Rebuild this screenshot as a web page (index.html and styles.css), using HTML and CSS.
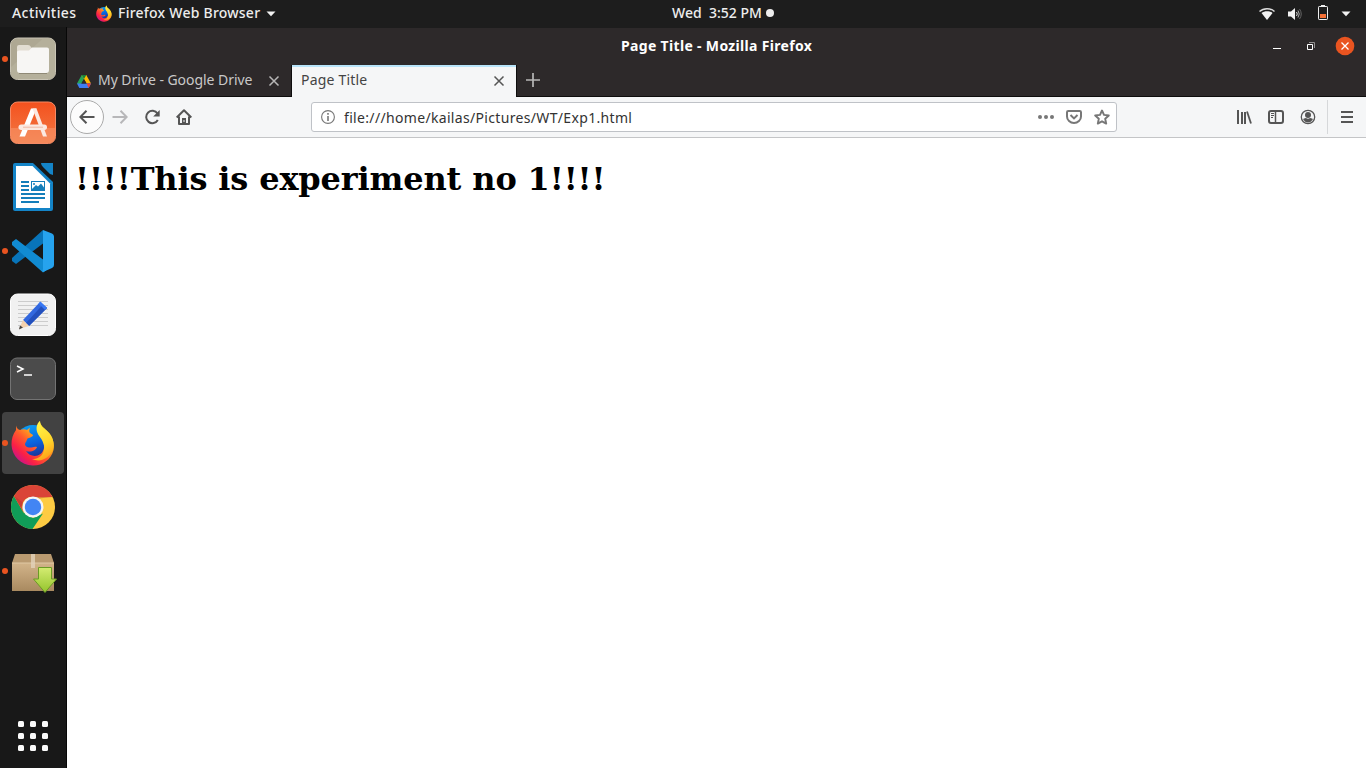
FILE: index.html
```html
<!DOCTYPE html>
<html lang="en">
<head>
<meta charset="utf-8">
<title>Page Title</title>
<link rel="stylesheet" href="styles.css">
</head>
<body>
<svg class="defs" width="0" height="0">
  <defs>
    <linearGradient id="fxBody" x1="0.85" y1="0.1" x2="0.15" y2="0.9"><stop offset="0" stop-color="#fff13a"/><stop offset="0.3" stop-color="#ffb01c"/><stop offset="0.55" stop-color="#ff5b2c"/><stop offset="0.8" stop-color="#fb2046"/><stop offset="1" stop-color="#c8148c"/></linearGradient>
    <linearGradient id="fxGlobe" x1="0.3" y1="0" x2="0.6" y2="1"><stop offset="0" stop-color="#0aa0f5"/><stop offset="0.5" stop-color="#0a62dd"/><stop offset="1" stop-color="#24217c"/></linearGradient>
    <linearGradient id="fxTail" x1="0.3" y1="0" x2="0.6" y2="1"><stop offset="0" stop-color="#fff44a"/><stop offset="0.6" stop-color="#ffd52a"/><stop offset="1" stop-color="#ff9f18"/></linearGradient>
    <linearGradient id="orange" x1="0" y1="0" x2="0" y2="1"><stop offset="0" stop-color="#f4511e"/><stop offset="1" stop-color="#f27a45"/></linearGradient>
    <linearGradient id="box" x1="0" y1="0" x2="0" y2="1"><stop offset="0" stop-color="#d2b48a"/><stop offset="1" stop-color="#a98a60"/></linearGradient>
    <linearGradient id="down" x1="0" y1="0" x2="0" y2="1"><stop offset="0" stop-color="#d4ec72"/><stop offset="1" stop-color="#94c42c"/></linearGradient>
    <symbol id="firefox" viewBox="0 0 44 46">
      <circle cx="22" cy="23.500" r="18.500" fill="url(#fxGlobe)"/>
      <path d="M5 5.500 C5.500 8 7 9.500 9 10 C11 9 14 9 16 10 L19 7.500 C18 10 18 12 19 13 L22 15 C22 17 18 18 16.500 18.500 L15 22 C13 24 14 27 18 27.500 C21 28 23 26 26 27 C25 30.500 20 32.500 15 31 C19 38 31 38 33 28 C34 19 28 16 27 10 C26 5 28 2 29 1 C29 6 34 8 37 12 C42 18 44 24 42.500 30 C40 40 31 46 21.500 45.500 C10 45 1 36 .5 25 C.3 19 2 14 5 10 Z" fill="url(#fxBody)"/>
      <path d="M29 1 C25 4 24.500 10 27.500 15 C32 21 35 26 32 33 C30 37 26 39 21 39 C30 43 39 38 42 29 C44 20 40 14 36 11 C31 8 29 5 29 1Z" fill="url(#fxTail)"/>
    </symbol>
  </defs>
</svg>

<header class="topbar">
  <span class="activities">Activities</span>
  <svg class="top-fox" width="16" height="17"><use href="#firefox"/></svg>
  <span class="appname">Firefox Web Browser</span>
  <svg class="caret" width="10" height="6"><path d="M.5.5h9L5 5.300z" fill="#f2f2f2"/></svg>
  <div class="clock"><span class="clock-day">Wed</span><span class="clock-time">3:52 PM</span><i class="clock-dot"></i></div>
  <div class="status">
    <svg class="wifi" width="16" height="14" viewBox="0 0 16 14"><path d="M.5 4.500C4.500.8 11.500.8 15.500 4.500" fill="none" stroke="#ddd" stroke-width="1.500"/><path d="M2.500 6C5.500 3.500 10.500 3.500 13.500 6L8 13z" fill="#f2f2f2"/></svg>
    <svg class="sound" width="16" height="14" viewBox="0 0 16 14"><path d="M1 4.500h3L8 1v12L4 9.500H1z" fill="#f2f2f2"/><path d="M9.500 5q1.500 2 0 4" stroke="#ddd" fill="none"/><path d="M11 3.500q2.500 3.500 0 7" stroke="#aaa" fill="none"/><path d="M12.500 2q3.500 5 0 10" stroke="#666" fill="none"/></svg>
    <svg class="battery" width="10" height="16" viewBox="0 0 10 16"><path d="M3 0h4v1H3z" fill="#eee"/><rect x=".5" y="1.500" width="9" height="13" rx=".7" fill="none" stroke="#eee"/><path d="M2 9h6v4H2z" fill="#f37036"/></svg>
    <svg width="10" height="6"><path d="M.5.5h9L5 5.300z" fill="#f2f2f2"/></svg>
  </div>
</header>

<div class="desktop">
  <nav class="dock">
    <div class="app running"><svg width="48" height="46" viewBox="0 0 48 46"><rect x="1.500" y="2" width="45" height="41.500" rx="7" fill="#aea893" stroke="#c9c4b5"/><path d="M2 31L34 2.500h6q6 0 6 6v29q-1 5-6 5.500H8q-6 0-6-6z" fill="#b5b09b"/><path d="M8 11q0-2 2-2h9q2 0 3 2l1.500 2v5H8z" fill="#e2ddd2"/><path d="M8 16q0-1.500 2-1.500h10l3-3h15q2 0 2 2V34q0 3-3 3H11q-3 0-3-3z" fill="#f7f6f4"/><path d="M10 37.500h28" stroke="#8f8976"/></svg></div>
    <div class="app"><svg width="48" height="46" viewBox="0 0 48 46"><rect x="1.500" y="2" width="45" height="41.500" rx="7" fill="url(#orange)" stroke="#f58a65"/><path d="M2 28h44v9q-1 6-7 6H8q-6 0-6-6z" fill="#f79a70" opacity=".5"/><path d="M22 8.500h5.500L16 36.500h-5.500z" fill="#fff"/><path d="M23.500 8.500h4l10.500 28h-4z" fill="#fbe9e2"/><rect x="9.500" y="24.500" width="28.500" height="5.500" rx="2.700" fill="#fbe9e2"/><path d="M14 27.300h20" stroke="#f2c7b7" stroke-width="1.500"/></svg></div>
    <div class="app"><svg width="48" height="50" viewBox="0 0 48 50"><path d="M4 3q0-2 2-2h18l20 19v27q0 2-2 2H6q-2 0-2-2z" fill="#1484c7"/><path d="M7 4h16.500L41 21.500V46H7z" fill="#fff"/><path d="M32 1h12v12q-3 0-5-3l-5-5q-2-2-2-4z" fill="#1484c7"/><path d="M12 20h8M12 24h8M12 28h8M12 32h24M12 36h24M12 40h18" stroke="#147eba" stroke-width="2"/><rect x="22.500" y="19.500" width="13" height="9" fill="#fff" stroke="#147eba"/><path d="M23 27l4-4 2 1.500 3-3 3 4V28H23z" fill="#147eba"/><circle cx="25" cy="22" r="1" fill="#147eba"/></svg></div>
    <div class="app running"><svg width="48" height="46" viewBox="0 0 48 46"><path d="M34 2L3 30v3l4 3 27-20.500z" fill="#0874b9"/><path d="M7 11L3 14v3l31 27.500 3-2V31.500H34z" fill="#118bd2"/><path d="M34 2l9 3.500q2 1 2 3V37q0 2-2 3l-9 4q-1 0 0-3V2z" fill="#26a3ee"/></svg></div>
    <div class="app"><svg width="48" height="46" viewBox="0 0 48 46"><rect x="1.500" y="2" width="45" height="41.500" rx="7" fill="#f1f1f1" stroke="#fff"/><path d="M9 9.500h30M9 13.500h30M9 17.500h30M9 21.500h30M9 25.500h30M9 29.500h30M9 33.500h30" stroke="#ccc"/><path d="M31 10l7 6-18 18-6-6z" fill="#3268df"/><path d="M34 12.500l4 3.500-18 18-3-3z" fill="#2350bd"/><path d="M29.500 11.500l2-2 6.500 6.500-2 2z" fill="#3878f4"/><path d="M14 28l6 6-10 3z" fill="#f4d1ae"/><path d="M11 33.500l3 2-4 2z" fill="#444"/></svg></div>
    <div class="app"><svg width="48" height="46" viewBox="0 0 48 46"><rect x="1.500" y="2" width="45" height="41.500" rx="6.500" fill="#4b4b4b" stroke="#737373"/><path d="M8 10l6 3-6 3" fill="none" stroke="#fff" stroke-width="1.500"/><path d="M15 19h8" stroke="#fff" stroke-width="1.500"/></svg></div>
    <div class="app running active"><svg width="44" height="46"><use href="#firefox"/></svg></div>
    <div class="app"><svg width="46" height="46" viewBox="0 0 46 46"><circle cx="23" cy="23" r="22" fill="#fdcb43"/><path d="M3.950 12A22 22 0 0 0 22.500 45L33 29.500 23 34 13.500 28.500z" fill="#109d58"/><path d="M3.950 12A22 22 0 0 1 42.500 13H23a10 10 0 0 0-9.500 15.500z" fill="#da4437"/><path d="M4 12l9.500 16.500 2-8zM42.500 13H24v2z" fill="#b5352e" opacity=".45"/><circle cx="23" cy="23" r="10.500" fill="#f4f5f6"/><circle cx="23" cy="23" r="8.200" fill="#4285f4"/></svg></div>
    <div class="app running"><svg width="48" height="46" viewBox="0 0 48 46"><path d="M6 6h36l3 9H3z" fill="#b99a70"/><path d="M3 15h42v28H3z" fill="url(#box)"/><path d="M3 15h42" stroke="#dfc8a4"/><path d="M22 6h4v14h-4z" fill="#e2d2ba" opacity=".8"/><path d="M29.500 19.500h13V31H47.500L36 44.500 24.500 31h5z" fill="url(#down)" stroke="#6b9c25"/></svg></div>
    <svg class="grid" width="32" height="32" viewBox="0 0 32 32" fill="#fbfbfb"><rect x="1" y="1" width="6" height="6" rx="1.500"/><rect x="13" y="1" width="6" height="6" rx="1.500"/><rect x="25" y="1" width="6" height="6" rx="1.500"/><rect x="1" y="13" width="6" height="6" rx="1.500"/><rect x="13" y="13" width="6" height="6" rx="1.500"/><rect x="25" y="13" width="6" height="6" rx="1.500"/><rect x="1" y="25" width="6" height="6" rx="1.500"/><rect x="13" y="25" width="6" height="6" rx="1.500"/><rect x="25" y="25" width="6" height="6" rx="1.500"/></svg>
  </nav>

  <main class="window">
    <div class="titlebar">
      <span class="title">Page Title - Mozilla Firefox</span>
      <svg class="controls" width="92" height="20" viewBox="0 0 92 20"><path d="M3 12.500h8" stroke="#fff"/><path d="M37.500 8.500h5v5h-5z" fill="none" stroke="#fff"/><path d="M39 6.500h5.500V12" fill="none" stroke="#929091"/><circle cx="75" cy="10" r="9.300" fill="#e95420"/><path d="M71.500 6.500l7 7m0-7l-7 7" stroke="#fff" stroke-width="1.300"/></svg>
    </div>
    <div class="tabs">
      <div class="tab">
        <svg class="drive" width="14" height="13" viewBox="0 0 14 13"><path d="M4.700 0h4.600L7 4 3 11 0 8.500z" fill="#25a45a"/><path d="M4.700 0h4.600L14 8.500H9.500z" fill="#ffba00"/><path d="M4.700 0h4.600L7 4z" fill="#16803a"/><path d="M0 8.500h14L11.700 13H2.300z" fill="#3d7df2"/><path d="M9.500 8.500H14L11.700 13z" fill="#ea4335"/><path d="M7 4L4.400 8.500h5.200z" fill="#2d292a"/></svg>
        <span class="tab-label drive-label">My Drive - Google Drive</span>
        <svg class="close" width="12" height="12" viewBox="0 0 12 12"><path d="M1.500 1.500l9 9m0-9l-9 9" stroke="#b8b7b7" stroke-width="1.500"/></svg>
      </div>
      <div class="tab selected">
        <span class="tab-label page-label">Page Title</span>
        <svg class="close" width="12" height="12" viewBox="0 0 12 12"><path d="M1.500 1.500l9 9m0-9l-9 9" stroke="#555" stroke-width="1.500"/></svg>
      </div>
      <svg class="newtab" width="14" height="14"><path d="M7 0v14M0 7h14" stroke="#b8b7b7" stroke-width="1.700"/></svg>
    </div>
    <div class="toolbar">
      <div class="nav">
        <div class="back"><svg width="16" height="16" viewBox="0 0 16 16"><path d="M15.500 8H1.500M7.500 1.800L1.300 8l6.200 6.200" fill="none" stroke="#555" stroke-width="2"/></svg></div>
        <svg width="16" height="16" viewBox="0 0 16 16"><path d="M.5 8h14M8.500 1.800L14.700 8l-6.200 6.200" fill="none" stroke="#b7b7b9" stroke-width="2"/></svg>
        <svg width="16" height="16" viewBox="0 0 16 16"><path d="M13.500 4.500A6.200 6.200 0 1 0 13.800 11" fill="none" stroke="#555" stroke-width="2"/><path d="M15.700 1v6.500H9.200z" fill="#555"/></svg>
        <svg width="16" height="16" viewBox="0 0 16 16"><path d="M.7 8.500L8 1.300l7.300 7.200M3 7.500V15h10V7.500" fill="none" stroke="#555" stroke-width="2" stroke-linejoin="round"/><path d="M6 15V9h4v6zM7.500 11v2h1v-2z" fill="#555" fill-rule="evenodd"/></svg>
      </div>
      <div class="urlbar">
        <svg width="14" height="14" viewBox="0 0 14 14"><circle cx="7" cy="7" r="6.400" fill="none" stroke="#777" stroke-width="1.100"/><path d="M7 3v1.700M7 6v5" stroke="#777" stroke-width="1.600"/></svg>
        <span class="url">file:///home/kailas/Pictures/WT/Exp1.html</span>
        <div class="page-actions">
          <svg width="16" height="16" viewBox="0 0 16 16" fill="#777"><circle cx="2" cy="8" r="2"/><circle cx="8" cy="8" r="2"/><circle cx="14" cy="8" r="2"/></svg>
          <svg width="16" height="16" viewBox="0 0 16 16"><path d="M2.300 2h11.400q1.300 0 1.300 1.300V7.500a7 6.500 0 0 1-14 0V3.300Q1 2 2.300 2z" fill="none" stroke="#777" stroke-width="2"/><path d="M4.500 6L8 9.400 11.500 6" fill="none" stroke="#777" stroke-width="2"/></svg>
          <svg width="16" height="16" viewBox="0 0 16 16"><path d="M8 1.500l2 4.400 4.800.6-3.600 3.300 1 4.800L8 12.300l-4.200 2.300 1-4.800L1.200 6.500 6 5.900z" fill="none" stroke="#777" stroke-width="1.900" stroke-linejoin="round"/></svg>
        </div>
      </div>
      <div class="tools">
        <svg width="16" height="16" viewBox="0 0 16 16"><path d="M2 1v14M6 3v12M9 3v12" stroke="#555" stroke-width="2"/><path d="M11 2.500L15 14.500" stroke="#555" stroke-width="1.800"/></svg>
        <svg width="16" height="16" viewBox="0 0 16 16"><rect x="1" y="2" width="14" height="12" rx="2" fill="none" stroke="#555" stroke-width="2"/><path d="M7.500 2v12" stroke="#555" stroke-width="1.500"/><path d="M3 4.500h3M3 6.500h3M3 8.500h2" stroke="#555"/></svg>
        <svg width="16" height="16" viewBox="0 0 16 16"><circle cx="8" cy="8" r="6.700" fill="none" stroke="#555" stroke-width="1.300"/><circle cx="8" cy="6" r="3" fill="#555"/><path d="M3 10q2-1 3-1 2 1.500 4 0 1 0 3 1-2 3.500-5 3.500t-5-3.500z" fill="#555"/></svg>
        <i class="separator"></i>
        <svg width="16" height="16" viewBox="0 0 16 16"><path d="M2 3h12M2 8h12M2 13h12" stroke="#555" stroke-width="2"/></svg>
      </div>
    </div>
    <section class="page"><h1>!!!!This is experiment no 1!!!!</h1></section>
  </main>
</div>
</body>
</html>
```
FILE: styles.css
```css
* { box-sizing: border-box; }
body { margin: 0; width: 1366px; height: 768px; overflow: hidden; display: flex; flex-direction: column; background: #181818; font-family: "Noto Sans", "Open Sans", sans-serif; font-size: 14px; }
svg { display: block; flex-shrink: 0; }
.defs { position: absolute; }
span { white-space: nowrap; }

.topbar { height: 27px; flex-shrink: 0; display: grid; grid-template-columns: 84px 22px 148px 406px 587px 107px; align-items: center; padding-left: 12px; background: #1d1d1d; color: #ededed; font-weight: 500; }
.topbar span { line-height: 24px; padding-bottom: 2px; }
.activities { letter-spacing: .42px; }
.appname { letter-spacing: .24px; }
.clock { display: flex; align-items: center; }
.clock-day { width: 37px; }
.clock-dot { width: 8px; height: 8px; border-radius: 50%; background: #ededed; margin: -1px 0 0 4px; }
.status { display: flex; align-items: center; }
.sound { margin-left: 12px; }
.battery { margin: -2px 13px 0 15px; }

.desktop { display: flex; flex: 1; min-height: 0; }
.dock { width: 67px; flex-shrink: 0; display: flex; flex-direction: column; background: #181818; border-right: 1px solid #070707; }
.app { width: 62px; height: 62px; margin: 1px 2px; flex-shrink: 0; display: grid; place-items: center; position: relative; border-radius: 4px; }
.active { background: #424242; }
.running::before { content: ""; position: absolute; left: 0; top: 28px; width: 6px; height: 6px; border-radius: 50%; background: #e95420; }
.grid { margin: auto 0 16px 17px; }

.window { flex: 1; min-width: 0; display: flex; flex-direction: column; background: #fff; border-top: 1px solid #1d1d1d; }
.titlebar { height: 37px; flex-shrink: 0; display: grid; grid-template-columns: 1fr 96px; background: #2d292a; color: #fff; }
.title { font-weight: 700; line-height: 36px; padding-left: 554px; letter-spacing: .33px; }
.controls { margin: 8px 0 0; }

.tabs { height: 32px; flex-shrink: 0; display: flex; background: #2d292a; box-shadow: inset 0 -1px #0e0d0d; }
.tab { width: 225px; display: flex; align-items: center; padding: 0 12px 0 10px; color: #c9c8c8; }
.tab .close { margin-left: auto; }
.drive { margin-right: 7px; }
.tab-label { line-height: 28px; padding-bottom: 2px; }
.drive-label { letter-spacing: -.04px; }
.page-label { letter-spacing: .2px; }
.selected { width: 224px; border-top: 2px solid #b8e4fa; background: #f5f6f7; color: #444; padding: 0 11px 2px 9px; box-shadow: -1px 0 #0e0d0d, 1px 0 #0e0d0d; }
.newtab { margin: 8px 0 0 10px; }

.toolbar { height: 41px; flex-shrink: 0; display: flex; align-items: center; background: #f5f6f7; border-bottom: 1px solid #c4c5c7; }
.nav { width: 244px; display: flex; align-items: center; gap: 16px; padding-left: 3px; }
.back { width: 34px; height: 34px; margin-right: -8px; display: grid; place-items: center; border: 1px solid #aaa; border-radius: 50%; background: #fcfcfc; }
.urlbar { width: 806px; height: 30px; display: flex; align-items: center; padding: 0 6px 0 9px; border: 1px solid #bfc2c7; border-radius: 3px; background: #fff; }
.url { color: #333; margin-left: 9px; letter-spacing: .33px; }
.page-actions { display: flex; gap: 12px; margin-left: auto; }
.tools { display: flex; align-items: center; gap: 16px; margin-left: 119px; }
.separator { width: 1px; height: 34px; margin: 0 -5px; background: #d6d8da; }

.page { flex: 1; padding: 22px 8px; }
.page h1 { margin: 0; color: #000; font: 700 32px/38px "DejaVu Serif", serif; letter-spacing: -.14px; white-space: nowrap; }
```
